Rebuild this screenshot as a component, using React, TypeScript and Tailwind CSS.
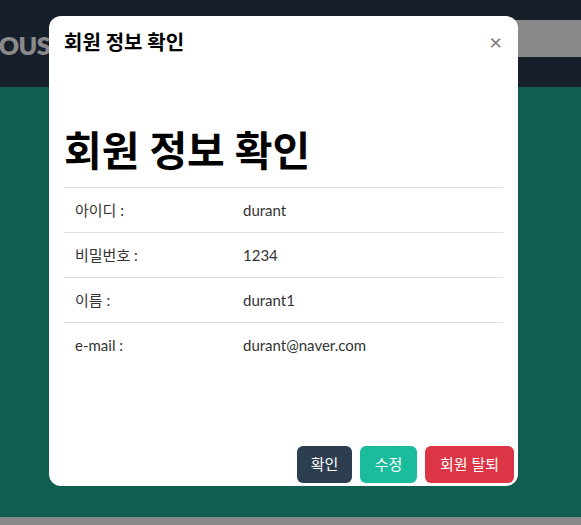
import React from 'react';

const rows = [
  { label: '아이디 :', value: 'durant' },
  { label: '비밀번호 :', value: '1234' },
  { label: '이름 :', value: 'durant1' },
  { label: 'e-mail :', value: 'durant@naver.com' },
];

const font = { fontFamily: 'Lato, "Noto Sans CJK KR", sans-serif' };

export default function App() {
  return (
    <div className="relative w-[581px] h-[525px] overflow-hidden flex flex-col" style={font}>
      {/* Header */}
      <header className="h-[87px] bg-[#171f2a] flex items-start justify-between pt-[20px]">
        <div className="-ml-[20px] mt-[7px] text-[25px] font-extrabold text-[#8a8a8a] tracking-tight">HOUSE</div>
        <div className="w-[160px] h-[37px] bg-[#8a8a8a]" />
      </header>

      {/* Main */}
      <main className="flex-1 bg-[#0f5e4f]" />
      <footer className="h-[8px] bg-[#888888]" />

      {/* Modal */}
      <div className="absolute left-[49px] top-[16px] w-[469px] h-[470px] bg-white rounded-[12px] flex flex-col">
        <div className="h-[52px] px-[15px] flex items-center justify-between">
          <h2 className="text-[20px] font-bold text-black">회원 정보 확인</h2>
          <button className="text-[22px] leading-none text-[#777] mr-[1px]">×</button>
        </div>
        <div className="flex-1 px-[15px] pt-[59px]">
          <h1 className="text-[41px] font-bold text-black leading-[48px] pb-[12px]">회원 정보 확인</h1>
          <div className="border-t border-[#dedede]">
            {rows.map((r, i) => (
              <div
                key={r.label}
                className={`flex h-[45px] items-center text-[15px] text-[#333] ${i < rows.length - 1 ? 'border-b border-[#dedede]' : ''}`}
              >
                <div className="w-[179px] pl-[11px]">{r.label}</div>
                <div>{r.value}</div>
              </div>
            ))}
          </div>
        </div>
        <div className="flex justify-end gap-[8px] pr-[4px] pb-[3px]">
          <button className="w-[55px] h-[37px] rounded-[6px] bg-[#2c3e50] text-white text-[15px]">확인</button>
          <button className="w-[57px] h-[37px] rounded-[6px] bg-[#1abc9c] text-white text-[15px]">수정</button>
          <button className="w-[89px] h-[37px] rounded-[6px] bg-[#dc3545] text-white text-[15px]">회원 탈퇴</button>
        </div>
      </div>
    </div>
  );
}
